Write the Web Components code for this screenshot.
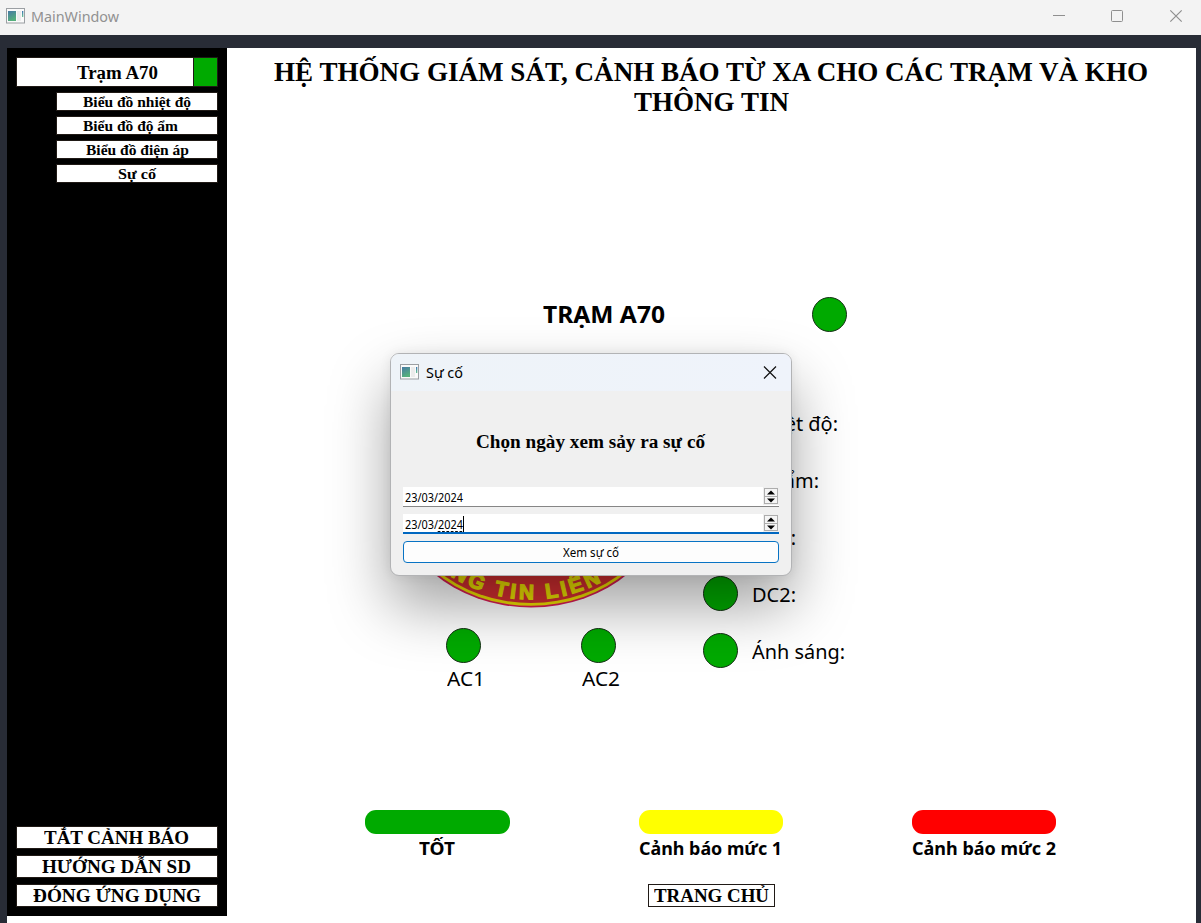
<!DOCTYPE html>
<html lang="vi"><head><meta charset="utf-8"><title>MainWindow</title>
<style>html,body{margin:0;height:100%;overflow:hidden}</style></head><body>
<main-window></main-window>
<script>
const def=(name,html,init)=>customElements.define(name,class extends HTMLElement{
  constructor(){super();const t=document.createElement('template');t.innerHTML=html;
    this.attachShadow({mode:'open'}).append(t.content.cloneNode(true));}
  connectedCallback(){init&&init(this,this.shadowRoot);}
});
/* One line of text set to an exact advance width; w = width, h = line height. */
def('fit-text',`<style>:host{display:block;flex:none;white-space:nowrap}span{display:inline-block;transform-origin:0 50%}</style><span><slot></slot></span>`,(h,r)=>{
  const s=r.querySelector('span'),w=+h.getAttribute('w'),lh=h.getAttribute('h');
  h.style.width=w+'px';h.style.height=h.style.lineHeight=lh+'px';
  s.style.transform='scaleX('+w/s.getBoundingClientRect().width+')';
});
def('app-icon',`<style>:host{display:block;width:19px;height:16px;flex:none}svg{display:block}</style>
<svg width="19" height="16"><defs><linearGradient id="g" x2="0.4" y2="1"><stop stop-color="#4779a5"/><stop offset="1" stop-color="#55b07c"/></linearGradient><linearGradient id="b" x2="0" y2="1"><stop stop-color="#3b75b5"/><stop offset="1" stop-color="#6ac391"/></linearGradient></defs>
<rect x=".5" y=".5" width="18" height="14.5" fill="#fafafa" stroke="#9b9fa3"/><rect x="2" y="3" width="8" height="10" fill="url(#g)"/><rect x="11" y="3" width="4" height="10" fill="#ececec"/><rect x="16" y="3" width="1.3" height="6" fill="url(#b)"/></svg>`);
def('title-bar',`<style>:host{display:flex;height:35px;background:#f3f3f3;align-items:flex-start;color:#919191;font:15px "Noto Sans","Open Sans",sans-serif}
app-icon{margin:8px 0 0 6px}.t{margin:5px 0 0 6px}.s{flex:1}svg{display:block}</style>
<app-icon></app-icon><div class="t"><slot></slot></div><div class="s"></div>
<svg width="149" height="35" fill="none" stroke="#8f8f8f"><path d="M1 15.5H13"/><rect x="59.5" y="10.5" width="11" height="11" rx="1"/><path d="M118.3 10.3l11.4 11.4m0-11.4l-11.4 11.4" stroke-width="1.2"/></svg>`);
def('menu-button',`<style>:host{display:flex;box-sizing:border-box;background:#fff;color:#000;justify-content:center;overflow:hidden;border:1px solid #201a16}</style><slot></slot>`);
def('side-bar',`<style>:host{display:flex;flex-direction:column;align-items:flex-end;box-sizing:border-box;width:220px;height:868px;background:#000;padding:9px 9px 9px;font:bold 15px "Liberation Serif",serif}
.st{display:flex;width:202px;height:30px;margin-bottom:5px}.st menu-button{width:178px;font-size:18.7px;padding-left:24px}
.g{width:24px;box-sizing:border-box;border:1px solid #201a16;border-left:0;background:#00aa00}
.sub{width:162px;height:19px;margin-bottom:5px}.big{width:202px;height:23px;margin-top:6px;font-size:18.7px;padding-right:1px}.f{flex:1}</style>
<div class="st"><menu-button><fit-text w="81" h="30">Trạm A70</fit-text></menu-button><div class="g"></div></div>
<menu-button class="sub"><fit-text w="108" h="18">Biểu đồ nhiệt độ</fit-text></menu-button>
<menu-button class="sub" style="padding-right:13px"><fit-text w="95" h="18">Biểu đồ độ ẩm</fit-text></menu-button>
<menu-button class="sub"><fit-text w="103" h="18">Biểu đồ điện áp</fit-text></menu-button>
<menu-button class="sub"><fit-text w="38" h="18">Sự cố</fit-text></menu-button><div class="f"></div>
<menu-button class="big"><fit-text w="145" h="22">TẮT CẢNH BÁO</fit-text></menu-button>
<menu-button class="big"><fit-text w="149" h="22">HƯỚNG DẪN SD</fit-text></menu-button>
<menu-button class="big"><fit-text w="168" h="22">ĐÓNG ỨNG DỤNG</fit-text></menu-button>`);
def('status-lamp',`<style>:host{display:block;box-sizing:border-box;width:35px;height:35px;flex:none;border-radius:50%;background:#00aa00;border:1px solid #163016}</style>`);
def('unit-emblem',`<style>:host{display:block}svg{display:block;overflow:visible}</style>
<svg width="240" height="200" viewBox="411 410 240 200"><defs><path id="a" d="M450.5 576A150 150 0 0 0 611.5 576"/></defs>
<ellipse cx="531" cy="489" rx="139" ry="118.5" fill="#d91e55"/><ellipse cx="531" cy="489" rx="137" ry="116.8" fill="#f0e000"/><ellipse cx="531" cy="489" rx="134" ry="114" fill="#d32f31"/>
<text font-family="Liberation Sans" font-weight="bold" font-size="21" fill="#ece000" stroke="#ece000" stroke-width="1.2"><textPath href="#a" textLength="158">NG TIN LIÊN</textPath></text></svg>`);
def('sensor-row',`<style>:host{display:flex;height:35px;align-items:center;gap:14px}div{padding-top:2px}</style><status-lamp></status-lamp><div><slot></slot></div>`);
def('ac-lamp',`<style>:host{display:flex;flex-direction:column;align-items:flex-start;width:38px}div{padding-left:1px}</style><status-lamp></status-lamp><div><slot></slot></div>`);
def('legend-item',`<style>:host{display:flex;flex-direction:column;align-items:center;width:144px}.b{width:100%;height:24px;border-radius:11px;margin-bottom:1px}</style><div class="b"></div><slot></slot>`,(h,r)=>{r.querySelector('.b').style.background=h.getAttribute('color');});
def('station-view',`<style>:host{display:flex;flex-direction:column;width:969px;height:875px;background:#fff;color:#000;font:20px "Noto Sans","Open Sans",sans-serif}
h1{margin:9px 2px 0 0;height:60px;font:bold 26.7px "Liberation Serif",serif;display:flex;flex-direction:column;align-items:center}
.head{display:flex;align-items:center;margin:180px 0 0 316px;height:35px;gap:147px;font-weight:bold;font-size:24px}
.body{display:flex;margin-top:73px;height:301px}.left{width:292px;margin-left:184px;height:286px}.acs{display:flex;gap:97px;margin:18px 0 0 35px}
.right{display:flex;flex-direction:column;gap:22px}
.legend{display:flex;justify-content:space-between;width:691px;margin:104px 0 0 138px;font-weight:bold;font-size:18px}
.home{width:127px;height:23px;margin:23px 0 0 421px;font:bold 18.7px "Liberation Serif",serif}</style>
<h1><fit-text w="874" h="30">HỆ THỐNG GIÁM SÁT, CẢNH BÁO TỪ XA CHO CÁC TRẠM VÀ KHO</fit-text><fit-text w="155" h="30" style="margin-left:2px">THÔNG TIN</fit-text></h1>
<div class="head"><fit-text w="122" h="33" style="margin-bottom:2px">TRẠM A70</fit-text><status-lamp></status-lamp></div>
<div class="body"><div class="left"><unit-emblem style="margin-top:5px"></unit-emblem>
<div class="acs"><ac-lamp><fit-text w="38" h="31">AC1</fit-text></ac-lamp><ac-lamp><fit-text w="38" h="31">AC2</fit-text></ac-lamp></div></div>
<div class="right"><sensor-row><fit-text w="86" h="36">Nhiệt độ:</fit-text></sensor-row><sensor-row><fit-text w="67" h="36">Độ ẩm:</fit-text></sensor-row><sensor-row><fit-text w="44" h="36">DC1:</fit-text></sensor-row><sensor-row><fit-text w="44" h="36">DC2:</fit-text></sensor-row><sensor-row><fit-text w="93" h="36">Ánh sáng:</fit-text></sensor-row></div></div>
<div class="legend"><legend-item style="width:145px" color="#00aa00"><fit-text w="36" h="26" style="margin-right:2px">TỐT</fit-text></legend-item><legend-item color="#ffff00"><fit-text w="143" h="26" style="margin-right:1px">Cảnh báo mức 1</fit-text></legend-item><legend-item color="#ff0000"><fit-text w="144" h="26">Cảnh báo mức 2</fit-text></legend-item></div>
<menu-button class="home"><fit-text w="115" h="22">TRANG CHỦ</fit-text></menu-button>`);
def('date-field',`<style>:host{display:flex;box-sizing:border-box;width:376px;height:20px;background:#fff;border-bottom:1px solid #868686;padding-left:2px;justify-content:space-between}
:host([active]){border-bottom:2px solid #0067c0}.v{display:flex}i{display:none;width:1px;height:16px;background:#000;margin-top:2px}:host([active]) i{display:block}
svg{display:block;background:#efefef}</style><div class="v"><slot></slot><i></i></div>
<svg width="16" height="18"><g fill="#f5f5f5" stroke="#adadad"><rect x="1.5" y="1.5" width="13" height="8"/><rect x="1.5" y="9.5" width="13" height="7"/></g><path d="M4 7.5L8 3.5L12 7.5zM4 11.5H12L8 15.5z"/></svg>`);
def('incident-dialog',`<style>:host{display:flex;flex-direction:column;box-sizing:border-box;width:402px;height:223px;border:1px solid #b2b3b5;border-radius:9px;background:#f0f0f0;overflow:hidden;color:#000;font:12px "Noto Sans","Open Sans",sans-serif;box-shadow:0 30px 60px rgba(0,0,0,.37),0 0 12px rgba(0,0,0,.07)}
header{display:flex;height:37px;background:linear-gradient(90deg,#eef3f8,#eff3fb);font-size:15px}header app-icon{margin:10px 7px 0 9px}.s{flex:1}
h2{margin:37px 0 0 85px;height:27px;font:bold 18.7px "Liberation Serif",serif}
.form{display:flex;flex-direction:column;margin:32px 0 0 12px}.b{box-sizing:border-box;display:flex;justify-content:center;width:376px;height:22px;border:1px solid #0873c4;border-radius:4px;background:#fdfdfd;margin-top:7px}
u{text-decoration-style:dashed;text-decoration-thickness:1px;text-underline-offset:2px}</style>
<header><app-icon></app-icon><fit-text w="37" h="36">Sự cố</fit-text><div class="s"></div><svg width="28" height="37" fill="none" stroke="#111" stroke-width="1.2"><path d="M1 12.5l12 12m0-12l-12 12"/></svg></header>
<h2><fit-text w="229" h="27">Chọn ngày xem sảy ra sự cố</fit-text></h2>
<div class="form"><date-field><fit-text w="58" h="21">23/03/2024</fit-text></date-field><date-field active style="margin-top:7px"><fit-text w="58" h="21">23/03/<u>2024</u></fit-text></date-field><div class="b"><fit-text w="56" h="21">Xem sự cố</fit-text></div></div>`);
def('main-window',`<style>:host{display:block;position:relative;width:1201px;height:923px;background:#282c36;overflow:hidden}
.c{display:flex;margin:13px 5px 0 7px;height:875px;background:#fff}
incident-dialog{position:absolute;left:390px;top:353px}</style>
<title-bar><fit-text w="88" h="23">MainWindow</fit-text></title-bar><div class="c"><side-bar></side-bar><station-view></station-view></div><incident-dialog></incident-dialog>`);
</script></body></html>
